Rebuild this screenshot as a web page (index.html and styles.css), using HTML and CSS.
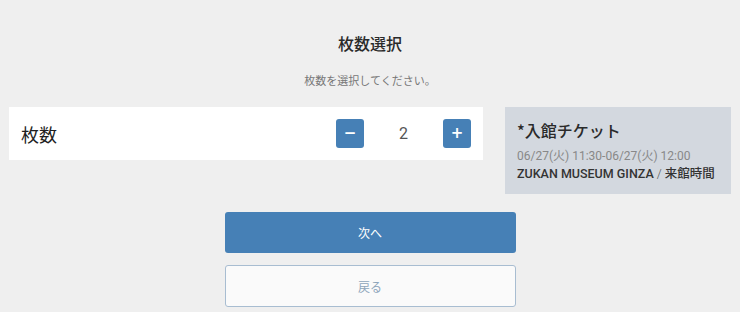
FILE: index.html
```html
<!DOCTYPE html>
<html lang="ja">
<head>
<meta charset="utf-8">
<link rel="stylesheet" href="styles.css">
</head>
<body>
<div class="page">
  <h1 class="title">枚数選択</h1>
  <p class="lead">枚数を選択してください。</p>
  <div class="row">
    <div class="qty-card">
      <span class="qty-label">枚数</span>
      <div class="stepper">
        <button class="step-btn" type="button">−</button>
        <span class="qty-value">2</span>
        <button class="step-btn" type="button">+</button>
      </div>
    </div>
    <div class="ticket">
      <div class="ticket-name">*入館チケット</div>
      <div class="ticket-date">06/27(火) 11:30-06/27(火) 12:00</div>
      <div class="ticket-venue">ZUKAN MUSEUM GINZA <span class="sep">/</span> 来館時間</div>
    </div>
  </div>
  <div class="actions">
    <button class="btn btn-primary" type="button">次へ</button>
    <button class="btn btn-secondary" type="button">戻る</button>
  </div>
</div>
</body>
</html>
```
FILE: styles.css
```css
* { box-sizing: border-box; }
html, body {
  margin: 0;
  padding: 0;
  background: #efefef;
}
body {
  font-family: "Noto Sans CJK JP", "Noto Sans", sans-serif;
  color: #333;
}
.page {
  display: flex;
  flex-direction: column;
  align-items: center;
  padding-top: 31px;
}
.title {
  margin: 0;
  font-size: 16px;
  line-height: 24px;
  font-weight: 500;
  color: #2a2a2a;
}
.lead {
  margin: 17px 0 0;
  font-size: 11px;
  line-height: 16px;
  color: #777;
}
.row {
  align-self: stretch;
  display: flex;
  align-items: flex-start;
  gap: 22px;
  padding: 0 9px;
  margin-top: 19px;
}
.qty-card {
  width: 474px;
  height: 53px;
  background: #fff;
  display: flex;
  align-items: center;
  justify-content: space-between;
  padding: 0 12px 0 12px;
}
.qty-label {
  font-size: 18px;
  font-weight: 400;
  color: #1f1f1f;
}
.stepper {
  display: flex;
  align-items: center;
}
.step-btn {
  width: 28px;
  height: 29px;
  border: 0;
  border-radius: 3px;
  background: #4680b6;
  color: #fff;
  font-family: "DejaVu Sans", sans-serif;
  font-size: 15px;
  line-height: 29px;
  padding: 0;
  font-weight: 700;
}
.qty-value {
  width: 79px;
  text-align: center;
  font-size: 16px;
  color: #555;
  font-family: Roboto, "Noto Sans", sans-serif;
}
.ticket {
  width: 226px;
  height: 87px;
  background: #d3d8df;
  padding: 11px 12px 0;
}
.ticket-name {
  font-size: 16px;
  line-height: 24px;
  font-weight: 500;
  color: #2a2a2a;
}
.ticket-date {
  margin-top: 6px;
  font-family: Roboto, "Noto Sans CJK JP", sans-serif;
  font-size: 12px;
  line-height: 17px;
  color: #888;
}
.ticket-venue {
  font-family: Roboto, "Noto Sans CJK JP", sans-serif;
  font-size: 12.5px;
  line-height: 17px;
  font-weight: 500;
  color: #333;
}
.sep {
  font-weight: 300;
  color: #555;
}
.actions {
  display: flex;
  flex-direction: column;
  gap: 12px;
  margin-top: 18px;
}
.btn {
  width: 291px;
  border-radius: 3px;
  font-family: "Noto Sans CJK JP", sans-serif;
  font-size: 12px;
  padding: 0;
}
.btn-primary {
  height: 41px;
  background: #4680b6;
  color: #fff;
  border: 0;
}
.btn-secondary {
  height: 42px;
  background: #fafafa;
  color: #8ea5bb;
  border: 1px solid #a8bdd1;
}
```
